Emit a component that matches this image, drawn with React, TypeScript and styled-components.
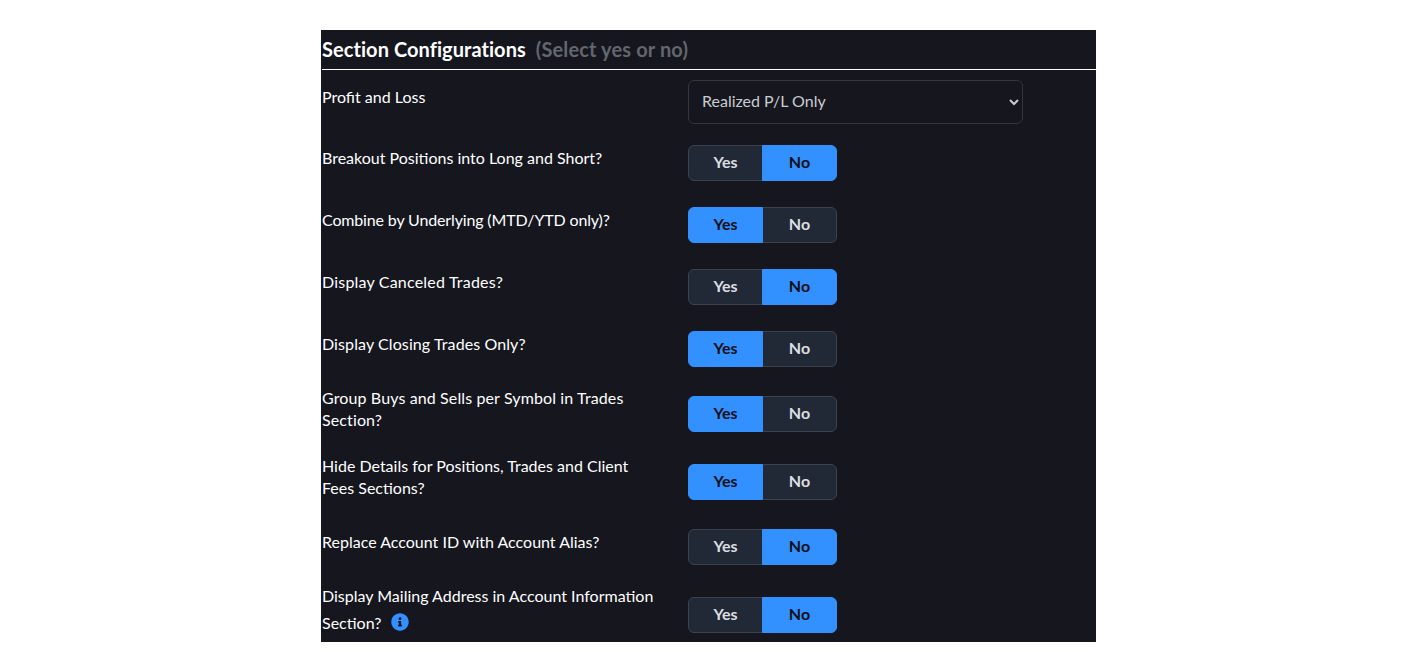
import React from "react";
import styled, { createGlobalStyle } from "styled-components";
import { FaInfoCircle } from "react-icons/fa";

const Global = createGlobalStyle`
  html, body { margin: 0; padding: 0; background: #fff; }
  body { font-family: Lato, "Open Sans", Arial, sans-serif; }
`;

const Panel = styled.section`
  box-sizing: border-box;
  width: 775px;
  height: 612px;
  margin: 30px 0 0 321px;
  padding-left: 1px;
  background: #15161e;
  overflow: hidden;
  color: #fff;
`;

const Header = styled.h2`
  box-sizing: border-box;
  height: 40px;
  margin: 0;
  padding-bottom: 2px;
  border-bottom: 1px solid #fff;
  display: flex;
  align-items: center;
  gap: 10px;
  font-size: 20px;
  font-weight: 700;
  line-height: 36px;
  letter-spacing: 0.06px;
`;

const Hint = styled.span`
  color: #62666e;
  letter-spacing: 0.13px;
`;

const Row = styled.div`
  display: grid;
  grid-template-columns: 366px 1fr;
  align-items: center;
  min-height: 62px;
`;

const Label = styled.div<{ $top?: number; $bottom?: number; $track?: number }>`
  box-sizing: border-box;
  width: 336px;
  padding: ${(p) => p.$top ?? 7}px 0 ${(p) => p.$bottom ?? 17}px;
  font-size: 16px;
  line-height: 22px;
  color: #fff;
  letter-spacing: ${(p) => p.$track ?? 0}px;
`;

const InfoLine = styled.span`
  display: inline-flex;
  align-items: center;
  gap: 9px;
  height: 32px;
  vertical-align: top;
`;

const InfoIcon = styled(FaInfoCircle)`
  margin: -3px 0 0 1px;
`;

const Select = styled.select`
  box-sizing: border-box;
  width: 335px;
  height: 44px;
  margin-top: 2px;
  padding: 0 9px 4px;
  background: #15161e;
  border: 1px solid #33363d;
  border-radius: 6px;
  color: #c9ccd1;
  font-family: inherit;
  font-size: 16px;
`;

const Toggle = styled.div`
  display: flex;
  width: 149px;
  height: 36px;
`;

const Option = styled.button<{ $active: boolean; $side: "left" | "right" }>`
  box-sizing: border-box;
  position: relative;
  z-index: ${(p) => (p.$active ? 1 : 0)};
  width: 75px;
  height: 36px;
  padding: 0 0 3px;
  margin-left: ${(p) => (p.$side === "right" ? "-1px" : "0")};
  font-family: inherit;
  font-size: 16px;
  font-weight: 700;
  cursor: pointer;
  color: ${(p) => (p.$active ? "#0b0e14" : "#dcdee2")};
  background: ${(p) => (p.$active ? "#3390ff" : "#222936")};
  border: 1px solid ${(p) => (p.$active ? "#3390ff" : "#3c424e")};
  border-radius: ${(p) => (p.$side === "left" ? "6px 0 0 6px" : "0 6px 6px 0")};
`;

const YesNo = ({ value }: { value: "yes" | "no" }) => (
  <Toggle>
    <Option $side="left" $active={value === "yes"}>Yes</Option>
    <Option $side="right" $active={value === "no"}>No</Option>
  </Toggle>
);

const rows: { label: string; value: "yes" | "no"; track?: number }[] = [
  { label: "Breakout Positions into Long and Short?", value: "no" },
  { label: "Combine by Underlying (MTD/YTD only)?", value: "yes", track: -0.15 },
  { label: "Display Canceled Trades?", value: "no", track: 0.2 },
  { label: "Display Closing Trades Only?", value: "yes", track: 0.1 },
  { label: "Group Buys and Sells per Symbol in Trades Section?", value: "yes", track: 0.12 },
  { label: "Hide Details for Positions, Trades and Client Fees Sections?", value: "yes" },
  { label: "Replace Account ID with Account Alias?", value: "no" },
];

export default function App() {
  return (
    <>
      <Global />
      <Panel>
        <Header>
          Section Configurations <Hint>(Select yes or no)</Hint>
        </Header>
        <Row>
          <Label $top={8} $bottom={16}>Profit and Loss</Label>
          <Select defaultValue="r">
            <option value="r">Realized P/L Only</option>
          </Select>
        </Row>
        {rows.map((r) => (
          <Row key={r.label}>
            <Label $track={r.track}>{r.label}</Label>
            <YesNo value={r.value} />
          </Row>
        ))}
        <Row>
          <Label $top={7} $bottom={13}>
            Display Mailing Address in Account Information{" "}
            <InfoLine>
              Section? <InfoIcon size={18} color="#3390ff" />
            </InfoLine>
          </Label>
          <YesNo value="no" />
        </Row>
      </Panel>
    </>
  );
}
